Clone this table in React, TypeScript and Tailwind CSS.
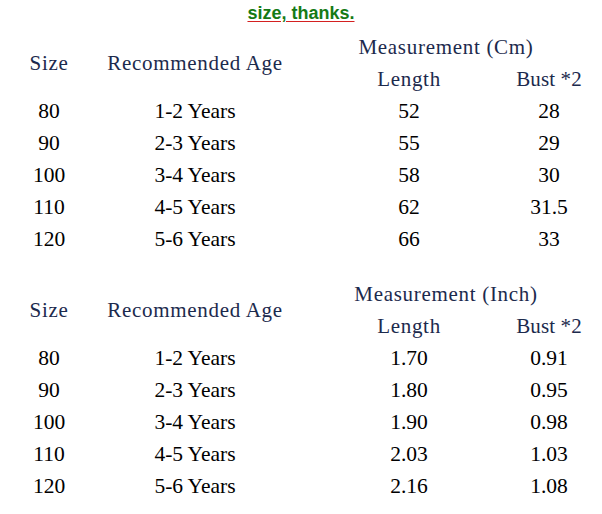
const headBase = "text-[#1c2a4d] text-[21px] pt-[1px]";
const headColor = `${headBase} tracking-[0.7px]`;

type Row = [string, string, string, string];

const cmRows: Row[] = [
  ["80", "1-2 Years", "52", "28"],
  ["90", "2-3 Years", "55", "29"],
  ["100", "3-4 Years", "58", "30"],
  ["110", "4-5 Years", "62", "31.5"],
  ["120", "5-6 Years", "66", "33"],
];

const inchRows: Row[] = [
  ["80", "1-2 Years", "1.70", "0.91"],
  ["90", "2-3 Years", "1.80", "0.95"],
  ["100", "3-4 Years", "1.90", "0.98"],
  ["110", "4-5 Years", "2.03", "1.03"],
  ["120", "5-6 Years", "2.16", "1.08"],
];

function Cell({ children, className = "" }: { children: React.ReactNode; className?: string }) {
  return <div className={`flex items-center justify-center whitespace-nowrap ${className}`}>{children}</div>;
}

function SizeTable({ unit, rows }: { unit: string; rows: Row[] }) {
  return (
    <div className="grid grid-cols-[98px_194px_234px_46px] auto-rows-[32px] text-[21.5px]">
      {/* header */}
      <Cell className={`row-span-2 ${headColor}`}>Size</Cell>
      <Cell className={`row-span-2 ${headColor}`}>Recommended Age</Cell>
      <div className="col-span-2 flex items-center">
        <Cell className={`w-[308px] shrink-0 ${headColor}`}>Measurement ({unit})</Cell>
      </div>
      <Cell className={headColor}>Length</Cell>
      <Cell className={`${headBase} tracking-[0.1px]`}>Bust *2</Cell>

      {rows.map((r) =>
        r.map((v, i) => (
          <Cell key={r[0] + i} className="text-black">
            {v}
          </Cell>
        ))
      )}
    </div>
  );
}

export default function App() {
  return (
    <div className="w-[602px] h-[514px] bg-white overflow-hidden font-['Liberation_Serif',serif]">
      <div className="h-[31px] flex justify-center">
        <span className="font-['Liberation_Sans',Arial,sans-serif] font-bold text-[18px] leading-[26px] text-[#157a15] underline decoration-[#d42020] underline-offset-[2px]">
          size, thanks.
        </span>
      </div>
      <SizeTable unit="Cm" rows={cmRows} />
      <div className="h-[23px]" />
      <SizeTable unit="Inch" rows={inchRows} />
    </div>
  );
}
